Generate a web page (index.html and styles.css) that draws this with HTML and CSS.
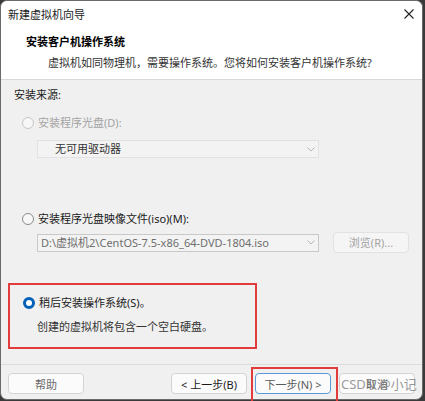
FILE: index.html
```html
<!DOCTYPE html>
<html lang="zh-CN">
<head>
  <meta charset="UTF-8" />
  <title>新建虚拟机向导</title>
  <link rel="stylesheet" href="styles.css">
</head>
<body>
  <div class="window">
    <div class="titlebar">
      <span class="title">新建虚拟机向导</span>
      <svg class="close" width="10" height="10" viewBox="0 0 10 10">
        <path d="M0.5 0.5 L9.5 9.5 M9.5 0.5 L0.5 9.5" stroke="#222" stroke-width="1.1" fill="none"/>
      </svg>
    </div>

    <div class="header">
      <div class="heading">安装客户机操作系统</div>
      <div class="subheading">虚拟机如同物理机，需要操作系统。您将如何安装客户机操作系统?</div>
    </div>

    <div class="content">
      <div class="label">安装来源:</div>

      <div class="option disabled">
        <span class="radio"></span>
        <span>安装程序光盘(D):</span>
      </div>
      <div class="combo combo-empty">
        <span>无可用驱动器</span>
        <svg class="chevron" width="8" height="5" viewBox="0 0 8 5"><path d="M0.5 0.5 L4 4 L7.5 0.5" stroke="#b5b5b5" fill="none"/></svg>
      </div>

      <div class="option option-iso">
        <span class="radio"></span>
        <span>安装程序光盘映像文件(iso)(M):</span>
      </div>
      <div class="iso-row">
        <div class="combo combo-path">
          <span>D:\虚拟机2\CentOS-7.5-x86_64-DVD-1804.iso</span>
          <svg class="chevron" width="8" height="5" viewBox="0 0 8 5"><path d="M0.5 0.5 L4 4 L7.5 0.5" stroke="#b5b5b5" fill="none"/></svg>
        </div>
        <div class="btn btn-disabled">浏览(R)...</div>
      </div>

      <div class="highlight">
        <div class="option">
          <span class="radio checked"></span>
          <span>稍后安装操作系统(S)。</span>
        </div>
        <div class="note">创建的虚拟机将包含一个空白硬盘。</div>
      </div>
    </div>

    <div class="footer">
      <div class="btn">帮助</div>
      <div class="btn-group">
        <div class="btn btn-dark">&lt; 上一步(B)</div>
        <div class="btn btn-primary">下一步(N) &gt;<span class="mark"></span></div>
        <div class="btn">取消<span class="watermark">CSDN @小记</span></div>
      </div>
    </div>
  </div>
</body>
</html>
```

FILE: styles.css
```css
* {
  margin: 0;
  padding: 0;
  box-sizing: border-box;
}
body {
  background: #3a3a3a;
  font-family: "Noto Sans", "Noto Sans CJK SC", sans-serif;
  font-size: 11px;
  color: #1a1a1a;
  width: 425px;
  height: 401px;
}
.window {
  width: 423px;
  height: 400px;
  background: #f0f0f0;
  border: 1px solid #6a6a6a;
  border-radius: 7px;
  display: flex;
  flex-direction: column;
}
.titlebar {
  height: 27px;
  background: #fff;
  border-radius: 7px 7px 0 0;
  display: flex;
  align-items: center;
  justify-content: space-between;
  padding: 0 8px 2px 7px;
}
.title {
  color: #1a1a1a;
}
.close {
  display: block;
}
.header {
  background: #fff;
  padding: 6px 0 8px 25px;
  border-bottom: 1px solid #d9d9d9;
  line-height: 16px;
}
.heading {
  font-weight: bold;
  color: #000;
}
.subheading {
  margin-top: 5px;
  padding-left: 22px;
  color: #333;
}
.content {
  flex: 1;
  padding: 7px 13px 0;
  line-height: 16px;
}
.label {
  color: #1a1a1a;
}
.option {
  display: flex;
  align-items: center;
  gap: 4px;
  padding-left: 8px;
  margin-top: 12px;
}
.option.disabled {
  color: #a3a3a3;
}
.radio {
  width: 12px;
  height: 12px;
  border-radius: 50%;
  border: 1px solid #8a8a8a;
  background: #f7f7f7;
  flex-shrink: 0;
}
.disabled .radio {
  border-color: #c6c6c6;
}
.radio.checked {
  border: 3.5px solid #005fb8;
  background: #fff;
}
.combo {
  height: 18px;
  width: 282px;
  margin-left: 23px;
  display: flex;
  align-items: center;
  justify-content: space-between;
  padding: 0 3px 0 3px;
  background: #f3f3f3;
  border: 1px solid #e2e2e2;
}
.combo-empty {
  margin-top: 9px;
  padding-left: 17px;
  color: #333;
}
.option-iso {
  margin-top: 53px;
}
.iso-row {
  margin-top: 5px;
  display: flex;
  align-items: center;
  gap: 14px;
  height: 21px;
}
.combo-path {
  color: #6e6e6e;
  border-color: #c9c9c9;
}
.chevron {
  display: block;
}
.btn {
  position: relative;
  width: 76px;
  height: 21px;
  display: flex;
  align-items: center;
  justify-content: center;
  background: #fbfbfb;
  border: 1px solid #d3d3d3;
  border-radius: 4px;
  color: #6a6a6a;
}
.btn-disabled {
  background: #f5f5f5;
  border-color: #e2e2e2;
  color: #a3a3a3;
}
.btn-dark {
  color: #1a1a1a;
}
.btn-primary {
  border-color: #5a9ad8;
  color: #5a5a5a;
}
.highlight {
  margin: 30px 0 0 -6px;
  width: 249px;
  border: 2px solid #e23b3b;
  padding: 10px 0 12px 13px;
}
.highlight .option {
  padding-left: 0;
  margin-top: 0;
  color: #1a1a1a;
}
.note {
  margin-top: 8px;
  padding-left: 14px;
  color: #333;
}
.footer {
  height: 35px;
  border-top: 1px solid #dcdcdc;
  display: flex;
  justify-content: space-between;
  padding: 8px 7px 0;
}
.btn-group {
  display: flex;
  gap: 8px;
}
.mark {
  position: absolute;
  left: -5px;
  top: -7px;
  width: 87px;
  height: 40px;
  border: 2px solid #e23b3b;
}
.watermark {
  position: absolute;
  left: 1px;
  top: 1px;
  font-size: 13px;
  line-height: 18px;
  color: rgba(120, 120, 120, 0.75);
  white-space: nowrap;
}
```
